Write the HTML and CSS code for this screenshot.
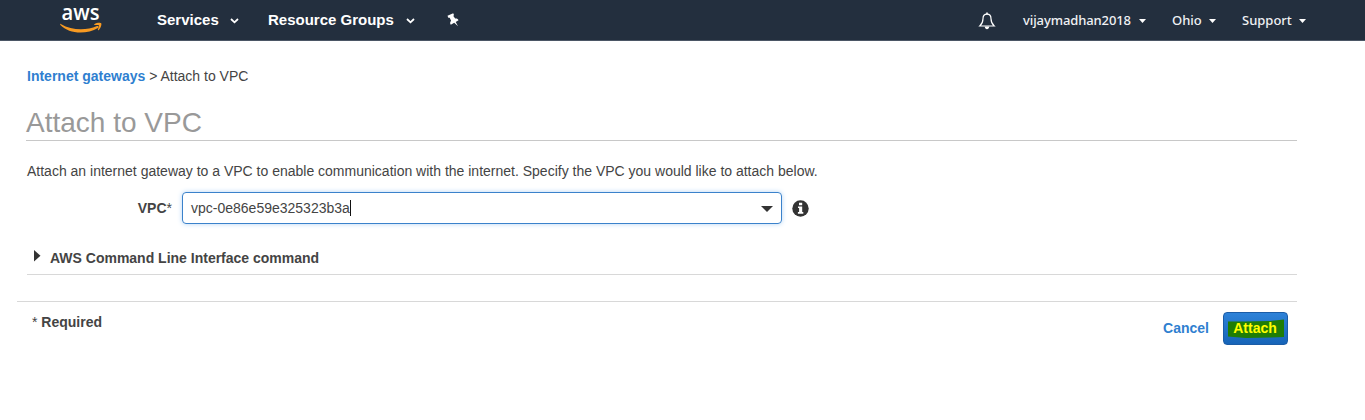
FILE: index.html
```html
<!DOCTYPE html>
<html lang="en">
<head>
<meta charset="utf-8">
<title>Attach to VPC</title>
<link rel="stylesheet" href="styles.css">
</head>
<body>
<header class="topbar">
  <a class="logo"><svg width="44" height="34" viewBox="0 0 44 34" role="img" aria-label="aws">
    <text class="logo-text" x="1.500" y="20" textLength="38" lengthAdjust="spacingAndGlyphs">aws</text>
    <g transform="translate(0 0.7)">
    <path class="smile" d="M0.8 23.2C12 30 26 30 37 25.400C38.500 24.900 39.400 26.200 38 27.200C26.500 34 9 33.500 0.400 24.300C0 23.600 0.200 22.900 0.800 23.200Z"/>
    <path class="smile" d="M34.300 23.500C36.500 21.900 40.600 21.700 41.200 22.600C41.900 23.700 40.800 27.200 38.900 29.200C38.300 29.700 37.600 29.400 37.900 28.700C38.700 26.800 39.300 25.200 38.800 24.600C38.300 24 36.200 24.200 34.800 24.400C34.200 24.500 34 23.900 34.300 23.500Z"/>
    </g>
  </svg></a>
  <nav class="main-nav">
    <a class="nav-item services"><span>Services</span><svg class="chev" width="9" height="6" viewBox="0 0 9 6"><path d="M1 1L4.500 4.300L8 1"/></svg></a>
    <a class="nav-item groups"><span>Resource Groups</span><svg class="chev" width="9" height="6" viewBox="0 0 9 6"><path d="M1 1L4.500 4.300L8 1"/></svg></a>
    <svg class="pin" width="12" height="14" viewBox="0 0 12 14"><path d="M0.500 2.800L6.200 0.300L7 2L6.300 2.900L8.200 5.500C9.700 5.100 10.900 5.700 11.500 7.200L8.700 8.900L11 13.300L7.200 9.700L3.800 11.700C2.800 10.300 3 8.800 4.100 7.700L2.700 4.700L1.300 4.700Z"/></svg>
  </nav>
  <nav class="user-nav">
    <svg class="bell" width="18" height="18" viewBox="0 0 18 18"><path class="bell-line" d="M9 2.200C6.300 2.200 5 4.100 5 6.700C5 10.200 4.200 11.700 1.800 14H16.200C13.800 11.700 13 10.200 13 6.700C13 4.100 11.700 2.200 9 2.200Z"/><path class="bell-fill" d="M8.200 0.500H9.800V2.400H8.200ZM6.700 14.500H11.300C11 16.300 10.200 17.200 9 17.200S7 16.300 6.700 14.500Z"/></svg>
    <a class="user-item account"><span class="account-name">vijaymadhan2018</span><svg class="caret" width="7" height="4" viewBox="0 0 7 4"><path d="M0 0H7L3.500 4Z"/></svg></a>
    <a class="user-item region"><span>Ohio</span><svg class="caret" width="7" height="4" viewBox="0 0 7 4"><path d="M0 0H7L3.500 4Z"/></svg></a>
    <a class="user-item support"><span>Support</span><svg class="caret" width="7" height="4" viewBox="0 0 7 4"><path d="M0 0H7L3.500 4Z"/></svg></a>
  </nav>
</header>
<main class="page">
  <div class="crumbs"><a class="link">Internet gateways</a> &gt; Attach to VPC</div>
  <h1 class="title">Attach to VPC</h1>
  <p class="intro">Attach an internet gateway to a VPC to enable communication with the internet. Specify the VPC you would like to attach below.</p>
  <div class="field">
    <label class="label">VPC<span class="star">*</span></label>
    <div class="combo"><span class="value">vpc-0e86e59e325323b3a</span><span class="cursor"></span><svg class="drop" width="12" height="6" viewBox="0 0 12 6"><path d="M0 0H12L6 6Z"/></svg></div>
    <svg class="info" width="17" height="17" viewBox="0 0 17 17"><circle cx="8.500" cy="8.500" r="8.200"/><path d="M7 2.800H10.200V5.200H7ZM6 6.400H10.200V12H11.300V13.700H5.900V12H7.100V8H6Z"/></svg>
  </div>
  <div class="cli"><svg class="expand" width="7" height="12" viewBox="0 0 7 12"><path d="M0 0L6.500 5.800L0 11.600Z"/></svg><span>AWS Command Line Interface command</span></div>
  <footer class="actions">
    <div class="required"><span class="star">*</span> Required</div>
    <a class="cancel">Cancel</a>
    <button class="attach"><svg class="marker" width="58" height="20" viewBox="0 0 58 20"><path d="M1 2.500L18 2.500L43 2L57 0.500V18L42 18.500L19 19L1 17.500Z"/></svg><span class="attach-text">Attach</span></button>
  </footer>
</main>
</body>
</html>
```
FILE: styles.css
```css
* { box-sizing: border-box; }
body { margin: 0; height: 420px; overflow: hidden; background: #fff; color: #444; font: 14px/20px "Liberation Sans", Arial, sans-serif; }
svg { display: block; flex: none; }
.topbar { display: flex; height: 41px; background: #232f3e; border-bottom: 1px solid #4b5665; color: #fff; }
.logo { width: 104px; padding-left: 60px; flex: none; margin-right: 53px; }
.logo svg { overflow: visible; }
.logo-text { font: 600 21.5px "Open Sans", sans-serif; fill: #fff; }
.smile { fill: #f79a22; }
.main-nav { display: flex; align-items: center; height: 40px; font-size: 15px; font-weight: bold; }
.nav-item { display: flex; align-items: center; justify-content: space-between; white-space: nowrap; }
.services { width: 82px; margin-right: 29px; }
.groups { width: 147px; margin-right: 32px; }
.chev { margin-top: 2px; fill: none; stroke: #fff; stroke-width: 1.8; }
.pin { fill: #fff; }
.user-nav { display: flex; align-items: center; height: 40px; margin-left: auto; padding-right: 59px; font: 500 13px "Noto Sans", sans-serif; color: #f0f2f4; }
.bell { margin: 1px 27px 0 0; }
.bell-line { fill: none; stroke: #fff; stroke-width: 1.2; }
.bell-fill { fill: #fff; }
.user-item { display: flex; align-items: center; justify-content: space-between; white-space: nowrap; }
.account { width: 123px; margin-right: 26px; }
.account-name { letter-spacing: -0.1px; }
.region { width: 44px; margin-right: 26px; }
.support { width: 64px; }
.caret { margin-top: 2px; fill: #fff; }
.page { width: 1280px; margin-left: 17px; padding-top: 25px; }
.crumbs { margin-left: 10px; }
.link, .cancel { color: #2f7fd0; font-weight: bold; }
.title { height: 36px; margin: 19px 0 0 9px; border-bottom: 1px solid #c8c8c8; color: #999; font-size: 28px; font-weight: normal; line-height: 36px; }
.intro { margin: 20px 0 0 10px; }
.field { display: flex; align-items: center; height: 32px; margin-top: 11px; }
.label { width: 155px; margin-right: 10px; text-align: right; font-weight: bold; }
.star { font-weight: normal; }
.combo { display: flex; align-items: center; width: 600px; height: 32px; padding: 0 8px; border: 1px solid #3b82cb; border-radius: 4px; box-shadow: 0 0 5px #b5d5f5; }
.cursor { width: 1px; height: 16px; background: #111; }
.drop { margin: 2px 0 0 auto; fill: #333; }
.info { margin: 0 0 0 10px; fill: #333; }
.info path { fill: #fff; }
.cli { display: flex; height: 27px; margin: 24px 0 0 10px; border-bottom: 1px solid #d8d8d8; font-weight: bold; }
.expand { margin: 2px 9px 0 7px; fill: #333; }
.actions { display: flex; height: 48px; margin-top: 26px; padding: 10px 9px 0 15px; border-top: 1px solid #d8d8d8; font-weight: bold; }
.required { margin-right: auto; }
.cancel { margin: 6px 14px 0 0; }
.attach { display: grid; place-items: center; width: 65px; height: 33px; padding: 0; border: 1px solid #1b5ca6; border-radius: 4px; background: linear-gradient(#2e82d8, #1664b8); color: #ffff00; font: bold 14px "Liberation Sans", Arial, sans-serif; }
.marker, .attach-text { grid-area: 1 / 1; }
.attach-text { padding: 0 1px 2px 0; }
.marker { fill: #1f7d06; }
```
